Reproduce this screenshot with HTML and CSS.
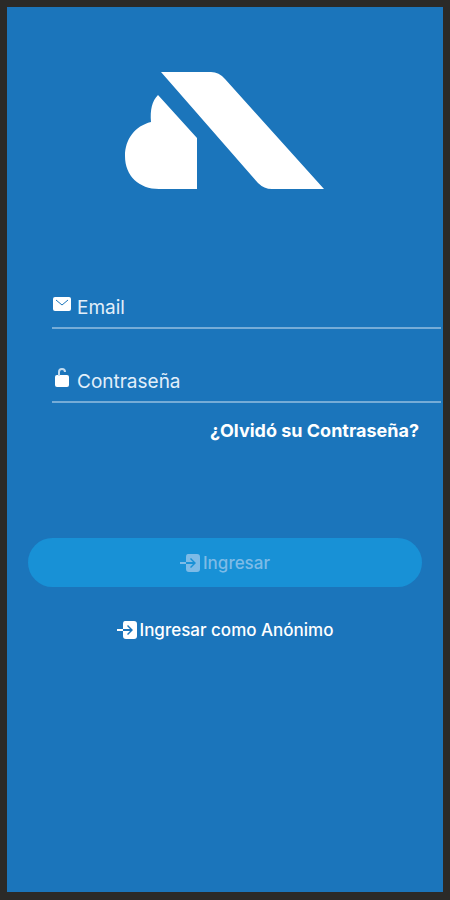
FILE: index.html
```html
<!DOCTYPE html>
<html lang="es">
<head>
<meta charset="utf-8">
<meta name="viewport" content="width=device-width, initial-scale=1">
<title>Ingresar</title>
<link rel="stylesheet" href="styles.css">
</head>
<body>
<main class="screen">
  <svg class="logo" viewBox="0 0 200 118" aria-hidden="true">
    <path d="M36 0H86Q94 0 100 7L199 117H147Q139 117 133 111Z"/>
    <path d="M33 23L72 66V117H34C14 117 0 104 0 84C0 67 10 54 26 50C25 38 27 29 33 23Z"/>
  </svg>
  <form class="form">
    <div class="field">
      <label class="field-icon" for="email" aria-label="Email">
        <svg viewBox="0 0 20 20" aria-hidden="true">
          <rect class="solid" x="1" y="3" width="18" height="14" rx="2"/>
          <path class="cut" d="M4 6L10 11L16 6"/>
        </svg>
      </label>
      <input class="input" id="email" type="email" placeholder="Email">
    </div>
    <div class="field">
      <label class="field-icon" for="password" aria-label="Contraseña">
        <svg viewBox="0 0 20 20" aria-hidden="true">
          <rect class="solid" x="3" y="7" width="14" height="12" rx="2"/>
          <path class="shackle" d="M7 8V4Q7 1 10 1Q13 1 13 4"/>
        </svg>
      </label>
      <input class="input" id="password" type="password" placeholder="Contraseña">
    </div>
    <a class="forgot" href="#">¿Olvidó su Contraseña?</a>
    <div class="actions">
      <button class="button primary" type="submit" disabled>
        <svg class="enter" viewBox="0 0 20 20" aria-hidden="true">
          <path class="solid" fill-rule="evenodd" d="M8 1H17Q20 1 20 4V16Q20 19 17 19H9Q6 19 6 16V11H13L10 14L11 15L16 10L11 5L10 6L13 9H6V4Q6 1 8 1Z"/>
          <path class="line" d="M0 10H6"/>
        </svg>Ingresar
      </button>
      <button class="button plain" type="button">
        <svg class="enter" viewBox="0 0 20 20" aria-hidden="true">
          <path class="solid" fill-rule="evenodd" d="M8 1H17Q20 1 20 4V16Q20 19 17 19H9Q6 19 6 16V11H13L10 14L11 15L16 10L11 5L10 6L13 9H6V4Q6 1 8 1Z"/>
          <path class="line" d="M0 10H6"/>
        </svg>Ingresar como Anónimo
      </button>
    </div>
  </form>
</main>
</body>
</html>
```
FILE: styles.css
```css
* {
  box-sizing: border-box;
}

body {
  margin: 0;
  min-height: 100vh;
  display: flex;
  padding: 7px 7px 8px;
  background: #2b2a28;
  color: #fff;
  font-family: Inter, "Liberation Sans", sans-serif;
  font-size: 18px;
  line-height: 24px;
}

.screen {
  flex: 1;
  display: flex;
  flex-direction: column;
  padding-top: 65px;
  background: #1b75bb;
}

.logo {
  width: 200px;
  align-self: center;
  fill: #fff;
}

.form {
  display: flex;
  flex-direction: column;
  margin-top: 97px;
}

.field {
  display: flex;
  align-items: center;
  gap: 5px;
  height: 42px;
  margin: 0 2px 32px 45px;
  border-bottom: 2px solid #76acd7;
}

.field-icon {
  height: 26px;
}

.field-icon svg {
  display: block;
  width: 20px;
  height: 20px;
}

.solid {
  fill: currentColor;
}

.line,
.shackle {
  fill: none;
  stroke: currentColor;
  stroke-width: 2;
}

.shackle {
  stroke: #c4dcf0;
}

.cut {
  fill: none;
  stroke: #1b75bb;
  stroke-width: 1;
}

.input {
  flex: 1;
  min-width: 0;
  padding: 2px 0 0;
  border: 0;
  outline: 0;
  background: none;
  color: inherit;
  font: inherit;
  font-size: 19px;
}

.input::placeholder {
  color: #e2effa;
  opacity: 1;
}

.forgot {
  align-self: flex-end;
  margin: -16px 24px 0 0;
  color: inherit;
  font-weight: 700;
  text-decoration: none;
}

.actions {
  display: flex;
  flex-direction: column;
  gap: 18px;
  margin: 95px 21px 0;
}

.button {
  display: flex;
  align-items: center;
  justify-content: center;
  gap: 3px;
  height: 49px;
  padding: 0;
  border: 0;
  border-radius: 25px;
  font: inherit;
  font-size: 17px;
  font-weight: 500;
}

.primary {
  background: #1891d6;
  color: #7dbbe7;
}

.plain {
  background: none;
  color: #fff;
}

.enter {
  width: 20px;
  height: 20px;
}
```
